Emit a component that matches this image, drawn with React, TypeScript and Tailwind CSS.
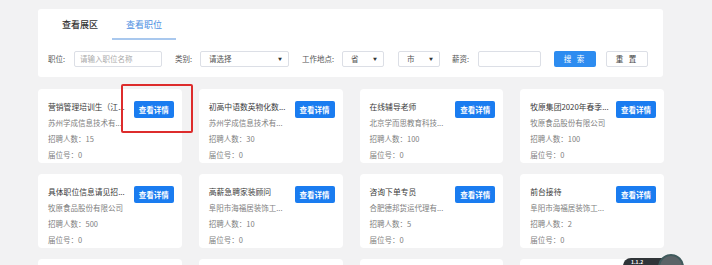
import React from 'react';

const jobs = [
  { title: '营销管理培训生（江...', company: '苏州学成信息技术有...', count: '15' },
  { title: '初高中语数英物化数...', company: '苏州学成信息技术有...', count: '30' },
  { title: '在线辅导老师', company: '北京学而思教育科技...', count: '100' },
  { title: '牧原集团2020年春季...', company: '牧原食品股份有限公司', count: '100' },
  { title: '具体职位信息请见招...', company: '牧原食品股份有限公司', count: '500' },
  { title: '高薪急聘家装顾问', company: '阜阳市海福居装饰工...', count: '10' },
  { title: '咨询下单专员', company: '合肥德邦货运代理有...', count: '5' },
  { title: '前台接待', company: '阜阳市海福居装饰工...', count: '2' },
  { title: '', company: '', count: '' },
  { title: '', company: '', count: '' },
  { title: '', company: '', count: '' },
  { title: '', company: '', count: '' },
];

const Select = ({ text, width }: { text: string; width: string }) => (
  <div className={`${width} h-[16px] border border-[#dcdfe6] rounded-[2px] flex items-center justify-between pl-[8px] pr-[6px] text-[#555]`}>
    <span>{text}</span>
    <span className="text-[4px] text-[#333]">▼</span>
  </div>
);

const JobCard = ({ job }: { job: (typeof jobs)[number] }) => (
  <div className="relative bg-white rounded-[4px] h-[74px] pl-[10px] pr-[8px] pt-[10px] flex justify-between">
    {job.title && (
      <>
        <div className="flex flex-col text-[7.5px] leading-[16px] text-[#808080]">
          <span className="text-[#3a3a3a] text-[7.8px]">{job.title}</span>
          <span>{job.company}</span>
          <span>招聘人数：{job.count}</span>
          <span>届位号：0</span>
        </div>
        <button className="mt-[2px] w-[40px] h-[17px] bg-[#1a7cf0] text-white text-[7.5px] font-bold rounded-[2px] shrink-0">
          查看详情
        </button>
      </>
    )}
  </div>
);

export default function App() {
  return (
    <div
      className="relative w-[712px] h-[265px] overflow-hidden bg-[#f2f2f3] pl-[38px]"
      style={{ fontFamily: '"Noto Sans CJK SC", "Noto Sans", sans-serif' }}
    >
      <div className="mt-[9px] w-[625px] bg-white rounded-[3px] pt-[3px] pb-[10px] pl-[10px]">
        <div className="flex text-[9px]">
          <div className="w-[64px] h-[28px] flex items-center justify-center border-b-2 border-transparent text-[#333] font-medium">
            查看展区
          </div>
          <div className="w-[64px] h-[28px] flex items-center justify-center border-b-2 border-[#a9c8ee] text-[#4d8fe2]">
            查看职位
          </div>
        </div>
        <div className="mt-[11px] flex items-center text-[7.5px] text-[#555]">
          <span className="w-[26px]">职位:</span>
          <div className="w-[88px] h-[16px] border border-[#dcdfe6] rounded-[2px] flex items-center pl-[5px] text-[#aaa]">
            请输入职位名称
          </div>
          <span className="ml-[13px] w-[25px]">类别:</span>
          <Select text="请选择" width="w-[89px]" />
          <span className="ml-[13px] w-[40px]">工作地点:</span>
          <Select text="省" width="w-[42px]" />
          <div className="ml-[14px]">
            <Select text="市" width="w-[42px]" />
          </div>
          <span className="ml-[12px] w-[26px]">薪资:</span>
          <div className="w-[63px] h-[16px] border border-[#dcdfe6] rounded-[2px]" />
          <button className="ml-[13px] w-[42px] h-[16px] bg-[#2d8cf0] text-white rounded-[2px] tracking-[2px]">
            搜 索
          </button>
          <button className="ml-[10px] w-[42px] h-[16px] bg-white border border-[#dcdfe6] text-[#444] rounded-[2px] tracking-[2px]">
            重 置
          </button>
        </div>
      </div>

      <div className="mt-[12px] w-[626px] grid grid-cols-4 gap-x-[17px] gap-y-[11px]">
        {jobs.map((job, i) => (
          <JobCard key={i} job={job} />
        ))}
      </div>

      {/* red highlight box */}
      <div className="absolute left-[121px] top-[84px] w-[72px] h-[49px] border-2 border-[#dd2c2c] rounded-[2px]" />

      {/* floating widget bottom right */}
      <div className="absolute left-[623px] top-[258px] w-[50px] h-[16px] rounded-full bg-[#2f3438] text-white text-[5px] leading-[6px] pl-[8px] pt-[1px] font-bold">
        1.1.2
      </div>
      <div className="absolute left-[658px] top-[254px] w-[26px] h-[26px] rounded-full bg-[#5b6367] border-2 border-[#3f5a5c]" />
    </div>
  );
}
